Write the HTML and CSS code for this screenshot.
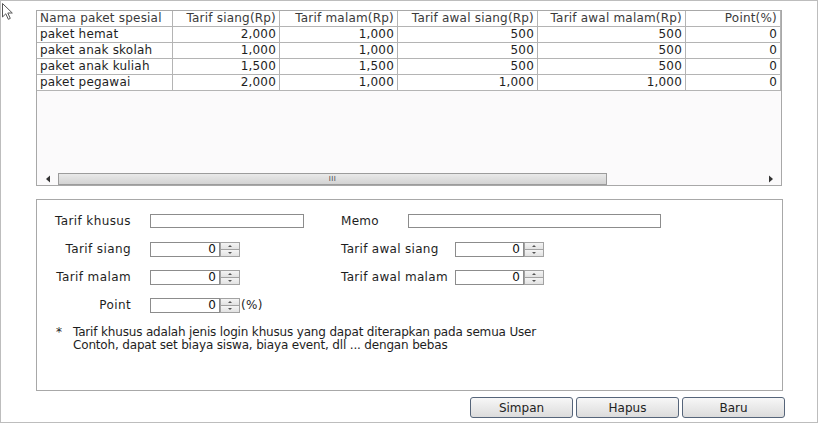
FILE: index.html
```html
<!DOCTYPE html>
<html>
<head>
<meta charset="utf-8">
<link rel="stylesheet" href="styles.css">
</head>
<body>
<div class="frame">
  <svg class="cursor" width="16" height="20" viewBox="0 0 16 20"><path d="M1.5 1.5 L1.5 15 L4.8 11.8 L7.3 17.3 L9.3 16.4 L6.8 11 L11.3 11 Z" fill="#fff" stroke="#555" stroke-width="1"/></svg>
  <div class="grid-box">
    <table class="grid">
      <colgroup>
        <col class="c1"><col class="c2"><col class="c3"><col class="c4"><col class="c5"><col class="c6">
      </colgroup>
      <thead>
        <tr><th class="name">Nama paket spesial</th><th>Tarif siang(Rp)</th><th>Tarif malam(Rp)</th><th>Tarif awal siang(Rp)</th><th>Tarif awal malam(Rp)</th><th>Point(%)</th></tr>
      </thead>
      <tbody>
        <tr><td class="name">paket hemat</td><td>2,000</td><td>1,000</td><td>500</td><td>500</td><td>0</td></tr>
        <tr><td class="name">paket anak skolah</td><td>1,000</td><td>1,000</td><td>500</td><td>500</td><td>0</td></tr>
        <tr><td class="name">paket anak kuliah</td><td>1,500</td><td>1,500</td><td>500</td><td>500</td><td>0</td></tr>
        <tr><td class="name">paket pegawai</td><td>2,000</td><td>1,000</td><td>1,000</td><td>1,000</td><td>0</td></tr>
      </tbody>
    </table>
    <div class="hscroll">
      <span class="arrow"><svg width="6" height="8" viewBox="0 0 6 8"><path d="M5 0.5 L5 7.5 L1 4 Z" fill="#333"/></svg></span>
      <div class="track"><div class="thumb"><span class="grip">III</span></div></div>
      <span class="arrow"><svg width="6" height="8" viewBox="0 0 6 8"><path d="M1 0.5 L1 7.5 L5 4 Z" fill="#333"/></svg></span>
    </div>
  </div>

  <div class="panel">
    <div class="row">
      <div class="left"><span class="lbl-l">Tarif khusus</span><input class="text-in" type="text"></div>
      <div class="right"><span class="lbl-r memo-lbl">Memo</span><input class="text-in memo" type="text"></div>
    </div>
    <div class="row">
      <div class="left"><span class="lbl-l">Tarif siang</span><span class="spin"><input type="text" value="0"><span class="spin-btns"><span class="up"></span><span class="down"></span></span></span></div>
      <div class="right"><span class="lbl-r">Tarif awal siang</span><span class="spin narrow"><input type="text" value="0"><span class="spin-btns"><span class="up"></span><span class="down"></span></span></span></div>
    </div>
    <div class="row">
      <div class="left"><span class="lbl-l">Tarif malam</span><span class="spin"><input type="text" value="0"><span class="spin-btns"><span class="up"></span><span class="down"></span></span></span></div>
      <div class="right"><span class="lbl-r">Tarif awal malam</span><span class="spin narrow"><input type="text" value="0"><span class="spin-btns"><span class="up"></span><span class="down"></span></span></span></div>
    </div>
    <div class="row">
      <div class="left"><span class="lbl-l">Point</span><span class="spin"><input type="text" value="0"><span class="spin-btns"><span class="up"></span><span class="down"></span></span></span><span class="pct">(%)</span></div>
    </div>
    <div class="note">
      <span class="star">*</span>
      <p class="note-text">Tarif khusus adalah jenis login khusus yang dapat diterapkan pada semua User<br>Contoh, dapat set biaya siswa, biaya event, dll ... dengan bebas</p>
    </div>
  </div>

  <div class="buttons">
    <button class="btn">Simpan</button>
    <button class="btn">Hapus</button>
    <button class="btn">Baru</button>
  </div>
</div>
</body>
</html>
```
FILE: styles.css
```css
body {
  margin: 0;
  background: #fff;
  font-family: "DejaVu Sans", Verdana, sans-serif;
  font-size: 12px;
  color: #1e1e1e;
}
.frame {
  position: relative;
  box-sizing: border-box;
  width: 818px;
  height: 423px;
  border: 1px solid #bdbdbd;
  padding: 9px 0 0 35px;
}
.cursor {
  position: absolute;
  left: 0;
  top: 1px;
}
.grid-box {
  box-sizing: border-box;
  width: 746px;
  height: 176px;
  border: 1px solid #a8a8a8;
  background: #fbfafb;
  display: flex;
  flex-direction: column;
  justify-content: space-between;
}
.grid {
  border-collapse: separate;
  border-spacing: 0;
  table-layout: fixed;
  width: 744px;
  background: #fff;
}
.c1 { width: 136px; }
.c2 { width: 107px; }
.c3 { width: 118px; }
.c4 { width: 140px; }
.c5 { width: 148px; }
.c6 { width: 95px; }
.grid th, .grid td {
  box-sizing: border-box;
  height: 16px;
  padding: 0 3px;
  border-right: 1px solid #b4b4b4;
  border-bottom: 1px solid #b4b4b4;
  font-weight: normal;
  text-align: right;
  white-space: nowrap;
  overflow: hidden;
  line-height: 15px;
  letter-spacing: 0.2px;
}
.grid th { color: #3a3a3a; }
.grid .name { text-align: left; }
.hscroll {
  display: grid;
  grid-template-columns: 21px minmax(0, 1fr) 20px;
  height: 12px;
}
.arrow {
  display: flex;
  align-items: center;
  justify-content: center;
}
.arrow svg { display: block; }
.track {
  min-width: 0;
}
.thumb {
  box-sizing: border-box;
  width: 549px;
  height: 12px;
  border: 1px solid #9c9c9c;
  background: linear-gradient(#e9e9e9, #d3d3d3);
  display: flex;
  align-items: center;
  justify-content: center;
}
.grip {
  font-size: 7px;
  line-height: 7px;
  color: #444;
  letter-spacing: 0.5px;
}
.panel {
  box-sizing: border-box;
  width: 747px;
  height: 192px;
  margin-top: 13px;
  border: 1px solid #a8a8a8;
  padding-top: 7px;
}
.row {
  display: flex;
  height: 28px;
  align-items: center;
}
.left {
  width: 304px;
  display: flex;
  align-items: center;
}
.lbl-l {
  width: 94px;
  text-align: right;
  margin-right: 19px;
  letter-spacing: 0.4px;
}
.right {
  display: flex;
  align-items: center;
  letter-spacing: 0.3px;
}
.lbl-r { width: 114px; }
.lbl-r.memo-lbl { width: 67px; }
.text-in {
  box-sizing: border-box;
  width: 154px;
  height: 14px;
  margin: 0;
  border: 1px solid #8c8c8c;
  background: #fff;
  padding: 0;
}
.text-in.memo { width: 253px; }
.spin {
  display: flex;
  height: 15px;
}
.spin input {
  box-sizing: border-box;
  width: 70px;
  height: 15px;
  margin: 0;
  border: 1px solid #8c8c8c;
  background: #fff;
  text-align: right;
  padding: 0 3px 0 0;
  font: inherit;
  line-height: 13px;
  color: #111;
}
.spin.narrow input { width: 69px; }
.spin-btns {
  width: 20px;
  display: flex;
  flex-direction: column;
}
.spin-btns span {
  box-sizing: border-box;
  flex: 1;
  border: 1px solid #a2a2a2;
  background: linear-gradient(#f4f4f4, #e2e2e2);
  display: flex;
  align-items: center;
  justify-content: center;
}
.spin-btns .down { border-top: 0; }
.spin-btns .up::before {
  content: "";
  border-style: solid;
  border-width: 0 2px 2px 2px;
  border-color: transparent transparent #555 transparent;
}
.spin-btns .down::before {
  content: "";
  border-style: solid;
  border-width: 2px 2px 0 2px;
  border-color: #555 transparent transparent transparent;
}
.pct { margin-left: 1px; letter-spacing: 0.3px; }
.note {
  display: flex;
  margin-top: 7px;
  line-height: 13px;
}
.star {
  width: 17px;
  padding-left: 19px;
}
.note-text {
  margin: 0;
  letter-spacing: -0.17px;
}
.buttons {
  display: flex;
  justify-content: flex-end;
  gap: 3px;
  width: 749px;
  margin-top: 6px;
}
.btn {
  box-sizing: border-box;
  width: 103px;
  height: 21px;
  margin: 0;
  border: 1px solid #56657a;
  border-radius: 3px;
  background: linear-gradient(#f7f7f7, #dcdcdc);
  font: inherit;
  color: #222;
  padding: 0;
}
```
